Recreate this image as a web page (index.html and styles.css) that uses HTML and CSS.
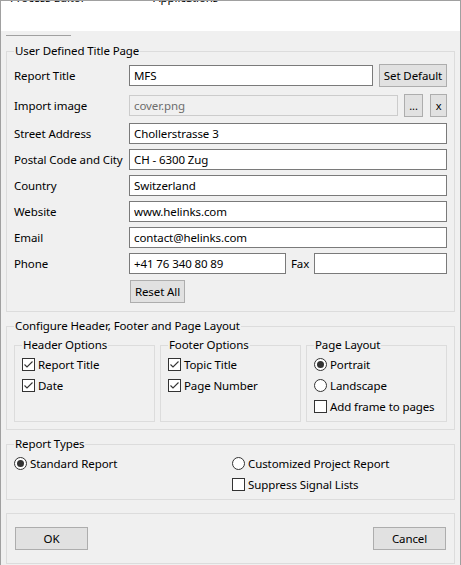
FILE: index.html
```html
<!DOCTYPE html>
<html lang="en">
<head>
    <meta charset="UTF-8">
    <title>Report Settings</title>
    <link rel="stylesheet" href="styles.css">
</head>
<body>
    <div class="window">
        <!-- tab strip, scrolled almost out of view -->
        <div class="tab-strip">
            <span class="tab-peek">Process Editor</span>
            <span class="tab-peek second">Applications</span>
        </div>

        <div class="panel">
            <div class="tab-rule"></div>

            <!-- Title page -->
            <fieldset class="group title-group">
                <legend>User Defined Title Page</legend>

                <div class="row tall first">
                    <label class="row-label">Report Title</label>
                    <input class="text title-input" type="text" value="MFS">
                    <button class="btn set-default">Set Default</button>
                </div>
                <div class="row tall second">
                    <label class="row-label">Import image</label>
                    <input class="text image-input" type="text" value="cover.png" disabled>
                    <button class="btn small-btn browse">...</button>
                    <button class="btn small-btn clear">x</button>
                </div>
                <div class="row third">
                    <label class="row-label">Street Address</label>
                    <input class="text" type="text" value="Chollerstrasse 3">
                </div>
                <div class="row">
                    <label class="row-label">Postal Code and City</label>
                    <input class="text" type="text" value="CH - 6300 Zug">
                </div>
                <div class="row">
                    <label class="row-label">Country</label>
                    <input class="text" type="text" value="Switzerland">
                </div>
                <div class="row">
                    <label class="row-label">Website</label>
                    <input class="text" type="text" value="www.helinks.com">
                </div>
                <div class="row">
                    <label class="row-label">Email</label>
                    <input class="text" type="text" value="contact@helinks.com">
                </div>
                <div class="row">
                    <label class="row-label">Phone</label>
                    <input class="text phone-input" type="text" value="+41 76 340 80 89">
                    <label class="fax-label">Fax</label>
                    <input class="text" type="text" value="">
                </div>
                <div class="reset-row">
                    <button class="btn reset-btn">Reset All</button>
                </div>
            </fieldset>

            <!-- Header / footer / layout -->
            <fieldset class="group layout-group">
                <legend>Configure Header, Footer and Page Layout</legend>
                <div class="sub-groups">
                    <fieldset class="group sub">
                        <legend>Header Options</legend>
                        <div class="option"><span class="check on"><svg viewBox="0 0 11 11"><path d="M1.5 5.5 L4 8 L9.5 2.5" /></svg></span>Report Title</div>
                        <div class="option"><span class="check on"><svg viewBox="0 0 11 11"><path d="M1.5 5.5 L4 8 L9.5 2.5" /></svg></span>Date</div>
                    </fieldset>
                    <fieldset class="group sub">
                        <legend>Footer Options</legend>
                        <div class="option"><span class="check on"><svg viewBox="0 0 11 11"><path d="M1.5 5.5 L4 8 L9.5 2.5" /></svg></span>Topic Title</div>
                        <div class="option"><span class="check on"><svg viewBox="0 0 11 11"><path d="M1.5 5.5 L4 8 L9.5 2.5" /></svg></span>Page Number</div>
                    </fieldset>
                    <fieldset class="group sub">
                        <legend>Page Layout</legend>
                        <div class="option"><span class="radio on"></span>Portrait</div>
                        <div class="option"><span class="radio"></span>Landscape</div>
                        <div class="option"><span class="check"></span>Add frame to pages</div>
                    </fieldset>
                </div>
            </fieldset>

            <!-- Report types -->
            <fieldset class="group types-group">
                <legend>Report Types</legend>
                <div class="types">
                    <div class="option"><span class="radio on"></span>Standard Report</div>
                    <div class="option"><span class="radio"></span>Customized Project Report</div>
                    <div></div>
                    <div class="option"><span class="check"></span>Suppress Signal Lists</div>
                </div>
            </fieldset>

            <!-- Dialog buttons -->
            <div class="button-box">
                <button class="btn dialog-btn">OK</button>
                <button class="btn dialog-btn">Cancel</button>
            </div>
        </div>
    </div>
</body>
</html>
```

FILE: styles.css
```css
/* Base */
body {
    margin: 0;
    font-family: "Noto Sans", "Open Sans", sans-serif;
    font-size: 11.5px;
    letter-spacing: -0.1px;
    color: #000;
    background: #fff;
}

.window {
    width: 461px;
    height: 565px;
    box-sizing: border-box;
    border: 1px solid #a0a0a0;
    border-bottom: none;
    overflow: hidden;
    background: #f0f0f0;
}

/* Tab strip */
.tab-strip {
    height: 30px;
    background: #fff;
    overflow: hidden;
    display: flex;
    padding-left: 9px;
}

.tab-peek {
    line-height: 15px;
    margin-top: -11px;
    height: 15px;
}

.tab-peek.second {
    margin-left: 68px;
}

.panel {
    padding: 4px 5px 0;
}

.tab-rule {
    width: 65px;
    height: 1px;
    background: #a0a0a0;
}

/* Group boxes */
.group {
    margin: 0;
    border: 1px solid #dcdcdc;
    padding: 0 7px;
    min-width: 0;
}

.group legend {
    padding: 0 1px;
    line-height: 16px;
}

.title-group {
    margin-top: 7px;
    padding-top: 5px;
    padding-bottom: 8px;
}

.layout-group {
    margin-top: 6px;
    padding-top: 3px;
    padding-bottom: 7px;
}

.types-group {
    margin-top: 6px;
    padding-top: 1px;
    padding-bottom: 4px;
}

/* Title page rows */
.row {
    display: flex;
    align-items: center;
    height: 21px;
    margin-top: 5px;
}

.row.tall {
    height: 23px;
}

.row.first {
    margin-top: 0;
}

.row.second {
    margin-top: 7px;
}

.row.third {
    margin-top: 6px;
}

.row-label {
    width: 115px;
    flex-shrink: 0;
    white-space: nowrap;
}

.text {
    flex: 1;
    min-width: 0;
    height: 21px;
    box-sizing: border-box;
    border: 1px solid #7a7a7a;
    background: #fff;
    padding: 0 4px;
    font: inherit;
    letter-spacing: inherit;
    color: #000;
    outline: none;
}

.text:disabled {
    background: #f0f0f0;
    border-color: #cccccc;
    color: #6d6d6d;
}

.phone-input {
    flex: 0 0 157px;
}

.fax-label {
    width: 28px;
    padding-left: 5px;
    box-sizing: border-box;
    flex-shrink: 0;
}

.btn {
    height: 23px;
    box-sizing: border-box;
    border: 1px solid #adadad;
    background: #e1e1e1;
    font: inherit;
    letter-spacing: inherit;
    color: #000;
    padding: 0;
}

.set-default {
    width: 68px;
    margin-left: 6px;
}

.small-btn {
    width: 19px;
    margin-left: 6px;
    font-size: 11px;
}

.small-btn.clear {
    width: 17px;
    margin-left: 7px;
}

.reset-row {
    margin-top: 6px;
    padding-left: 116px;
}

.reset-btn {
    width: 55px;
}

/* Checkboxes and radios */
.option {
    display: flex;
    align-items: center;
    height: 21px;
    white-space: nowrap;
}

.check,
.radio {
    width: 13px;
    height: 13px;
    box-sizing: border-box;
    border: 1px solid #333;
    background: #fff;
    margin-right: 3px;
    flex-shrink: 0;
    display: flex;
    align-items: center;
    justify-content: center;
}

.check svg {
    width: 11px;
    height: 11px;
}

.check svg path {
    fill: none;
    stroke: #333;
    stroke-width: 1.1;
}

.radio {
    border-radius: 50%;
}

.radio.on::after {
    content: "";
    width: 7px;
    height: 7px;
    border-radius: 50%;
    background: #333;
}

/* Header / footer sub groups */
.sub-groups {
    display: grid;
    grid-template-columns: repeat(3, 141px);
    column-gap: 5px;
}

.group.sub {
    padding: 1px 7px 4px;
}

/* Report types */
.types {
    display: grid;
    grid-template-columns: 218px 1fr;
}

/* Dialog buttons */
.button-box {
    margin-top: 13px;
    border: 1px solid #dcdcdc;
    padding: 13px 8px;
    display: flex;
    justify-content: space-between;
}

.dialog-btn {
    width: 73px;
}
```
